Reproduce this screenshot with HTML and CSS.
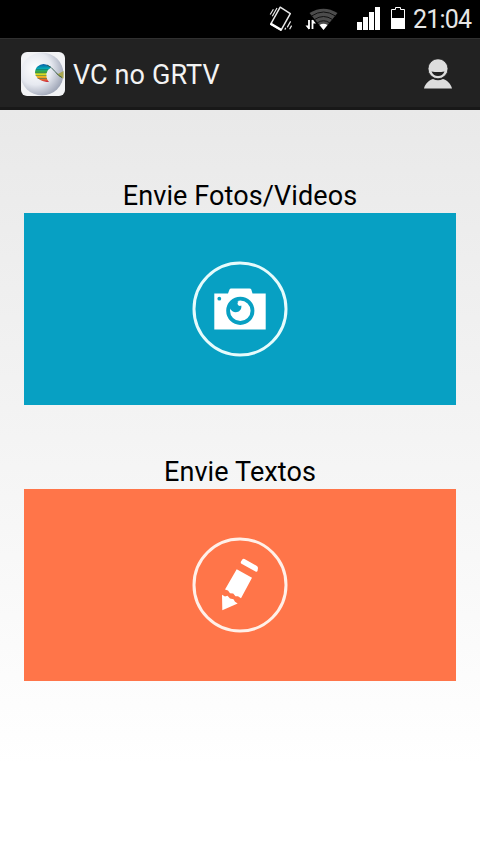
FILE: index.html
```html
<!DOCTYPE html>
<html lang="pt-BR">
<head>
    <meta charset="UTF-8">
    <meta name="viewport" content="width=device-width, initial-scale=1.0">
    <title>VC no GRTV</title>
    <link rel="stylesheet" href="styles.css">
</head>
<body>
    <div class="status-bar">
        <svg class="vibrate" width="24" height="28" viewBox="0 0 24 28">
            <g fill="none" stroke="#e8e8e8">
                <path d="M11.2 2.2L21.3 8.6L12.1 25.2L1.7 19.2Z" stroke-width="1.5" stroke-linejoin="round"/>
                <path d="M1.2 9.5L4.4 4.2M3.3 11.2L8 3M18.2 22.4L21.6 16.4M15.8 24.6L16.8 22.8M20.6 24.2L22.6 20.6" stroke-width="1.2"/>
            </g>
            <path d="M2 17.6L13 24L11.8 26L1 19.8Z" fill="#fff"/>
        </svg>
        <svg class="wifi" width="34" height="24" viewBox="0 0 34 24">
            <path d="M4.5 6Q18.5 -2.5 32.5 6L18.5 23Z" fill="#4c4c4c"/>
            <path d="M6.5 9Q18.5 1 30.5 9M9.5 12.5Q18.5 6.5 27.5 12.5M12 16Q18.5 11.5 25 16" fill="none" stroke="#111" stroke-width="1"/>
            <path d="M14.5 18Q18.5 15.5 22.5 18L18.5 23Z" fill="#fff"/>
            <path d="M4 13V22M7.5 13V22" stroke="#fff" stroke-width="1.8"/>
            <path d="M.5 18.5H4V22.8ZM7.5 12.5V16.5H11Z" fill="#fff"/>
        </svg>
        <svg class="signal" width="24" height="24" viewBox="0 0 24 24" fill="#fff">
            <path d="M0 16H5V24H0ZM6 11H11V24H6ZM12 6H17V24H12ZM18 1H23V24H18Z"/>
        </svg>
        <svg class="battery" width="14" height="22" viewBox="0 0 14 22">
            <path d="M.5 21.5V2.5H4.5V.5H9.5V2.5H13.5V21.5Z" fill="#000" stroke="#fff"/>
            <path d="M0 11H14V22H0Z" fill="#fff"/>
        </svg>
        <span class="clock">21:04</span>
    </div>

    <div class="action-bar">
        <svg class="logo" width="44" height="44" viewBox="0 0 44 44">
            <defs>
                <radialGradient id="sphere" cx=".35" cy=".38" r=".68">
                    <stop offset="0" stop-color="#fff"/>
                    <stop offset=".55" stop-color="#e6e9f0"/>
                    <stop offset="1" stop-color="#a0a7b8"/>
                </radialGradient>
                <linearGradient id="rainbow" x1="0" y1="0" x2="0" y2="1">
                    <stop offset="0" stop-color="#075ba8"/>
                    <stop offset=".25" stop-color="#06a9b4"/>
                    <stop offset=".42" stop-color="#36a944"/>
                    <stop offset=".6" stop-color="#e9dd20"/>
                    <stop offset=".8" stop-color="#ef8a20"/>
                    <stop offset="1" stop-color="#c82343"/>
                </linearGradient>
                <clipPath id="tile">
                    <rect width="44" height="44" rx="6"/>
                </clipPath>
            </defs>
            <g clip-path="url(#tile)">
                <rect width="44" height="44" fill="#f2f3f5"/>
                <circle cx="21" cy="22" r="21.5" fill="url(#sphere)"/>
                <path d="M29.5 14.5Q22 9.5 16.5 14.5C11 20 15 30 28 30Q24.5 26 25.5 21Q26.500 17.500 29.5 16Z" fill="url(#rainbow)"/>
                <path d="M15 17.5H27M14 20.5H26M14.500 23.500H25.500M16.500 26.500H26" stroke="#176d62" stroke-width=".5"/>
                <path d="M34.5 20.5L37 22L42.500 19V26.5Q38.5 25.5 34.5 20.5Z" fill="#a9a750"/>
                <path d="M26 13Q30 14.500 34 19.500T41 25.500" fill="none" stroke="#31584b" stroke-width=".9"/>
            </g>
        </svg>
        <h1 class="title">VC no GRTV</h1>
        <svg class="profile" width="28" height="30" viewBox="0 0 28 30" fill="#ddd">
            <path d="M0 29.500C1 25 5 21 9 20Q14 22.500 19 20C23 21 27 25 28 29.500Z"/>
            <circle cx="14" cy="9.800" r="10" stroke="#222" stroke-width=".8"/>
            <path d="M7.5 12.5Q14 13.5 20.5 12.5Q18.5 17 14 17T7.5 12.5Z" fill="#222"/>
        </svg>
    </div>

    <div class="content">
        <div class="option">
            <h2 class="label">Envie Fotos/Videos</h2>
            <div class="panel photos">
                <svg width="96" height="96" viewBox="0 0 96 96">
                    <circle cx="48" cy="48" r="46" fill="none" stroke="#e6fbfc" stroke-width="3"/>
                    <path d="M22.3 32.5H36L37.5 28.5Q38 27.5 39 27.5H57.5Q59 27.5 59.3 28.5L60.5 32.5H73.7V68.5H22.3Z" fill="#fff"/>
                    <circle cx="27.3" cy="37.7" r="1.9" fill="#07a0c3"/>
                    <circle cx="48.3" cy="49.8" r="12.2" fill="none" stroke="#07a0c3" stroke-width="3.8"/>
                    <path d="M38 45L43 39.5L46.5 40.5Q44.5 42.5 46.5 44.5Q48 45.3 49.3 44.5C50 48.5 47 51.2 43.8 51.2Q40 51 38 47.5Z" fill="#07a0c3"/>
                </svg>
            </div>
        </div>
        <div class="option">
            <h2 class="label">Envie Textos</h2>
            <div class="panel texts">
                <svg width="96" height="96" viewBox="0 0 96 96">
                    <circle cx="48" cy="48" r="46" fill="none" stroke="#fff0e9" stroke-width="3"/>
                    <g fill="#fff">
                        <path d="M49 24.5L50.5 22.3Q51.3 21.3 52.5 22L64.5 28.7Q66 29.7 66 31L65.5 34Q65 35.3 63.5 34.5L49.5 26.7Q48.3 26 49 24.5Z"/>
                        <path d="M44.7 32.2L60 40.8L49 61.2L46 59.2L43.5 59.2L41.2 56.5L38 56.2L36 53.5L33 52.5Z"/>
                        <path d="M30 57.8L33 59.5L35.5 58.8L38 61.5L41.5 62.3L43 64.8L45.7 66.5L30.3 73.2Z"/>
                    </g>
                </svg>
            </div>
        </div>
    </div>
</body>
</html>
```

FILE: styles.css
```css
* {
    box-sizing: border-box;
}
body {
    font-family: Roboto, "Liberation Sans", sans-serif;
    margin: 0;
    min-height: 100vh;
    display: flex;
    flex-direction: column;
    background: #fff;
    color: #000;
}
svg {
    display: block;
    flex: none;
}
.status-bar {
    display: flex;
    align-items: flex-start;
    justify-content: flex-end;
    height: 38px;
    padding-right: 9px;
    background: #000;
    color: #e6e6e6;
}
.vibrate {
    margin-top: 5px;
    margin-right: 12px;
}
.wifi {
    margin-top: 7px;
    margin-right: 18px;
}
.signal {
    margin-top: 6px;
    margin-right: 10px;
}
.battery {
    margin-top: 7px;
    margin-right: 8px;
}
.clock {
    width: 58px;
    font-size: 25px;
    letter-spacing: -0.8px;
    line-height: 40px;
    white-space: nowrap;
}
.action-bar {
    display: flex;
    align-items: center;
    height: 72px;
    padding: 2px 28px 0 21px;
    background: #222;
    border-top: 1px solid #303030;
    border-bottom: 3px solid #181818;
}
.title {
    margin: 0 auto 0 8px;
    padding-top: 1px;
    font-size: 27px;
    font-weight: normal;
    letter-spacing: 0.1px;
    line-height: 32px;
    color: #f3f3f3;
}
.content {
    flex: 1;
    display: flex;
    flex-direction: column;
    gap: 51px;
    padding: 70px 24px 0;
    background: linear-gradient(#e9e9e9, #fff 88%);
}
.label {
    margin: 0;
    padding-bottom: 1px;
    font-size: 27px;
    font-weight: normal;
    letter-spacing: 0.1px;
    line-height: 32px;
    text-align: center;
}
.panel {
    display: flex;
    align-items: center;
    justify-content: center;
    height: 192px;
}
.photos {
    background: #07a0c3;
}
.texts {
    background: #ff7549;
}
```
